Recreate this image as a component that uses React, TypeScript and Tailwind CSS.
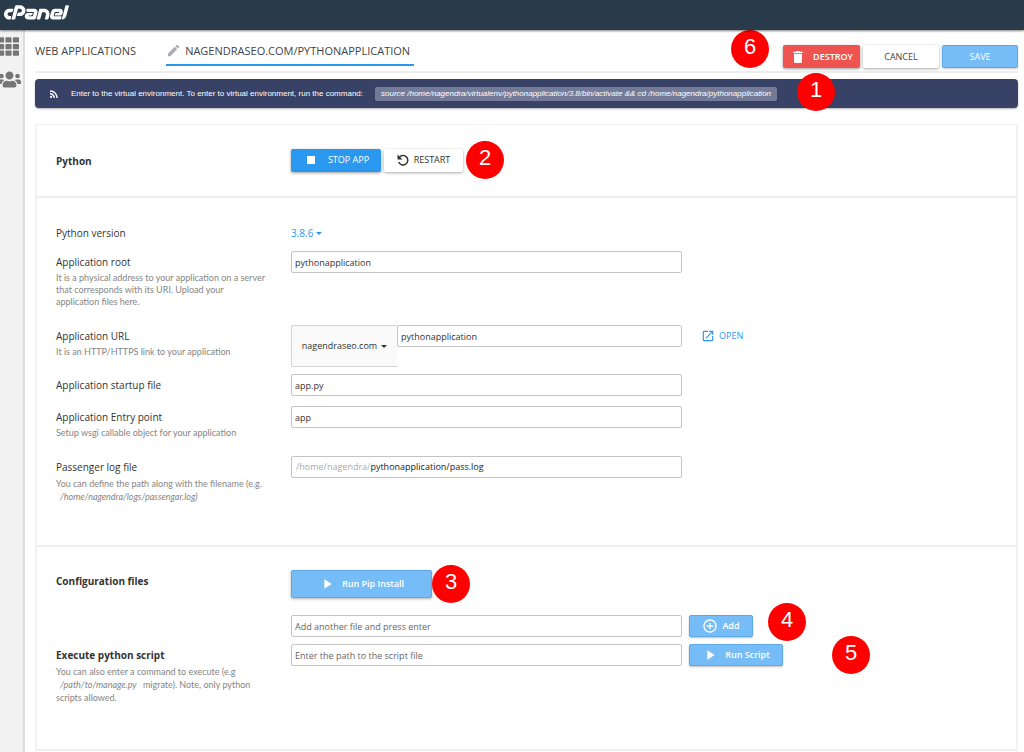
import type { ReactNode, ButtonHTMLAttributes } from "react";
import { FaCpanel, FaTh, FaUsers } from "react-icons/fa";
import {
  MdAddCircleOutline,
  MdDelete,
  MdEdit,
  MdOpenInNew,
  MdPlayArrow,
  MdRssFeed,
  MdStop,
} from "react-icons/md";

const inputClass =
  "h-[22px] w-full min-w-0 rounded-xs border border-[#c4c4c4] bg-white px-[3px] text-[9px] text-[#333] outline-none placeholder:text-[#666]";

type ButtonProps = ButtonHTMLAttributes<HTMLButtonElement>;

function Button({ className = "", children, ...rest }: ButtonProps) {
  return (
    <button
      type="button"
      className={`flex shrink-0 items-center justify-center rounded-xs text-[9px] ${className}`}
      {...rest}
    >
      {children}
    </button>
  );
}

function Marker({ value, className = "" }: { value: number; className?: string }) {
  return (
    <span
      className={`flex size-[38px] shrink-0 justify-center rounded-full bg-[#fe0000] pt-[5px] font-['Liberation_Sans',Arial,sans-serif] text-[22px] leading-6 text-white ${className}`}
    >
      {value}
    </span>
  );
}

function Caret({ className = "" }: { className?: string }) {
  return (
    <svg viewBox="0 0 6 3" aria-hidden="true" className={`h-[3px] w-[6px] fill-current ${className}`}>
      <path d="M0 0h6L3 3z" />
    </svg>
  );
}

function RestartIcon() {
  return (
    <svg viewBox="0 0 24 24" aria-hidden="true" className="size-3 text-[#333]">
      <path d="M4.2 7.5A9.4 9.4 0 1 1 3.4 16" fill="none" stroke="currentColor" strokeWidth="3" />
      <path d="M1 1v10h10z" fill="currentColor" />
    </svg>
  );
}

type RowProps = {
  label: string;
  htmlFor?: string;
  hint?: ReactNode;
  hintLeading?: string;
  bold?: boolean;
  extra?: ReactNode;
  labelPad?: string;
  className?: string;
  children: ReactNode;
};

function Row({
  label,
  htmlFor,
  hint,
  hintLeading = "leading-3",
  bold,
  extra,
  labelPad = "pt-[3px]",
  className = "",
  children,
}: RowProps) {
  const labelClass = bold
    ? "block text-[10px] leading-4 font-bold text-[#333]"
    : "block text-[10px] leading-4 text-[#333]";
  return (
    <div className={`grid grid-cols-[235px_minmax(0,391px)_minmax(0,1fr)] ${className}`}>
      <div className={`pr-5 ${labelPad}`}>
        {htmlFor ? (
          <label htmlFor={htmlFor} className={labelClass}>
            {label}
          </label>
        ) : (
          <h2 className={labelClass}>{label}</h2>
        )}
        {hint && (
          <p className={`mt-[2px] font-[Lato,sans-serif] text-[9px] text-[#858585] ${hintLeading}`}>{hint}</p>
        )}
      </div>
      <div className="flex items-start">{children}</div>
      <div className="flex items-start">{extra}</div>
    </div>
  );
}

export default function App() {
  return (
    <div className="flex min-h-screen flex-col bg-white font-['Open_Sans','Noto_Sans',sans-serif] text-[#333]">
      <header className="relative flex h-[30px] items-center bg-[#293a4a] shadow-[0_1px_2px_rgba(0,0,0,0.5)]">
        <a href="#home" aria-label="cPanel home" className="-mt-1 ml-1 block text-white">
          <FaCpanel className="h-[52px] w-[65px]" />
        </a>
      </header>

      <div className="flex grow">
        <nav className="flex w-[25px] shrink-0 flex-col gap-[11px] border-r-2 border-[#dcdcdc] bg-[#f2f2f2] pt-[6px] text-[#757575]">
          <a href="#applications" aria-label="Applications" className="-ml-[2px]">
            <FaTh className="size-[21px]" />
          </a>
          <a href="#users" aria-label="User manager" className="-ml-[2px]">
            <FaUsers className="size-[23px]" />
          </a>
        </nav>

        <main className="min-w-0 grow pr-[6px] pl-[10px]">
          <div className="flex h-[43px] items-start border-b-2 border-[#eeeeee] text-[11px]">
            <a href="#web-applications" className="pt-[13px] leading-4 text-[#444]">
              WEB APPLICATIONS
            </a>
            <a
              href="#pythonapplication"
              className="mt-[13px] ml-[30px] flex h-[23px] items-start gap-1 border-b-2 border-[#2a98f0] pr-1 leading-4 text-[#444]"
            >
              <MdEdit className="size-[15px] text-[#a9adb3]" />
              NAGENDRASEO.COM/PYTHONAPPLICATION
            </a>
            <Marker value={6} className="ml-auto" />
            <div className="mt-[15px] ml-[14px] flex gap-[3px]">
              <Button className="h-[23px] w-[77px] gap-[7px] bg-[#ef5350] font-semibold text-white shadow-[0_1px_3px_rgba(0,0,0,0.4)]">
                <MdDelete className="size-4" />
                DESTROY
              </Button>
              <Button className="h-[23px] w-[76px] bg-white text-[#444] shadow-[0_1px_3px_rgba(0,0,0,0.35)]">
                CANCEL
              </Button>
              <Button className="h-[23px] w-[76px] border border-[#5fa8e6] bg-[#76bcf7] text-white shadow-[0_1px_2px_rgba(0,0,0,0.2)]">
                SAVE
              </Button>
            </div>
          </div>

          <div className="relative mt-[6px] flex h-[29px] items-center rounded-sm bg-[#384166] px-[13px] font-['Liberation_Sans',Arial,sans-serif] text-[8px] text-white shadow-[0_1px_2px_rgba(0,0,0,0.3)]">
            <MdRssFeed className="size-3" />
            <span className="ml-[11px]">
              Enter to the virtual environment. To enter to virtual environment, run the command:
            </span>
            <code className="ml-3 rounded-xs bg-[#747b98] px-1.5 py-px font-['Liberation_Sans',Arial,sans-serif] leading-3 italic">
              source /home/nagendra/virtualenv/pythonapplication/3.8/bin/activate &amp;&amp; cd
              /home/nagendra/pythonapplication
            </code>
            <Marker value={1} className="absolute -top-[6px] left-[762px]" />
          </div>

          <div className="mt-4 border-x-2 border-t border-[#f2f2f2]">
            <section className="h-[73px] border-b-2 border-[#eeeeee] pt-4 pl-[19px]">
              <Row label="Python" bold labelPad="pt-3">
                <div className="flex items-center gap-[3px]">
                  <Button className="h-[23px] w-[90px] gap-[9px] bg-[#2b98f0] text-white shadow-[0_1px_3px_rgba(0,0,0,0.4)]">
                    <MdStop className="size-4" />
                    STOP APP
                  </Button>
                  <Button className="h-[23px] w-[79px] gap-[5px] bg-white text-[#333] shadow-[0_1px_3px_rgba(0,0,0,0.35)]">
                    <RestartIcon />
                    RESTART
                  </Button>
                  <Marker value={2} />
                </div>
              </Row>
            </section>

            <section className="border-b-2 border-[#eeeeee] pt-6 pb-[42px] pl-[19px]">
              <Row label="Python version" htmlFor="version">
                <div className="flex h-[22px] items-center gap-[3px] text-[#2b98f0]">
                  <select
                    id="version"
                    className="field-sizing-content appearance-none bg-transparent text-[10px] outline-none"
                  >
                    <option>3.8.6</option>
                  </select>
                  <Caret />
                </div>
              </Row>
              <Row
                className="mt-[7px]"
                label="Application root"
                htmlFor="root"
                hint={
                  <>
                    It is a physical address to your application on a server
                    <br />
                    that corresponds with its URI. Upload your
                    <br />
                    application files here.
                  </>
                }
              >
                <input id="root" className={inputClass} defaultValue="pythonapplication" />
              </Row>
              <Row
                className="mt-[17px]"
                label="Application URL"
                htmlFor="url"
                hint="It is an HTTP/HTTPS link to your application"
                extra={
                  <a
                    href="#open"
                    className="ml-[19px] flex h-[22px] items-center gap-1 text-[9px] text-[#2b98f0]"
                  >
                    <MdOpenInNew className="size-[14px]" />
                    OPEN
                  </a>
                }
              >
                <div className="flex h-[42px] w-[106px] shrink-0 items-center justify-center gap-1 rounded-l-xs border border-r-0 border-[#d4d4d4] bg-[#fafafa]">
                  <select
                    aria-label="Domain"
                    className="field-sizing-content appearance-none bg-transparent text-[9px] outline-none"
                  >
                    <option>nagendraseo.com</option>
                  </select>
                  <Caret />
                </div>
                <input id="url" className={inputClass} defaultValue="pythonapplication" />
              </Row>
              <Row className="mt-[7px]" label="Application startup file" htmlFor="startup">
                <input id="startup" className={inputClass} defaultValue="app.py" />
              </Row>
              <Row
                className="mt-[10px]"
                label="Application Entry point"
                htmlFor="entry"
                hint="Setup wsgi callable object for your application"
              >
                <input id="entry" className={inputClass} defaultValue="app" />
              </Row>
              <Row
                className="mt-[17px]"
                label="Passenger log file"
                htmlFor="log"
                hintLeading="leading-[13px]"
                hint={
                  <>
                    You can define the path along with the filename (e.g.
                    <br />
                    <i className="ml-1">/home/nagendra/logs/passengar.log)</i>
                  </>
                }
              >
                <div className="flex h-[22px] w-full items-center rounded-xs border border-[#c4c4c4] px-1 text-[9px]">
                  <span className="text-[#aaa]">/home/nagendra/</span>
                  <input
                    id="log"
                    className="min-w-0 grow bg-transparent text-[#222] outline-none"
                    defaultValue="pythonapplication/pass.log"
                  />
                </div>
              </Row>
            </section>

            <section className="border-b-2 border-[#eeeeee] pt-[18px] pb-[45px] pl-[19px]">
              <Row label="Configuration files" bold labelPad="pt-2">
                <div className="flex items-center">
                  <Button className="h-7 w-[141px] gap-[7px] border border-[#5fa8e6] bg-[#76bcf7] font-semibold text-white shadow-[0_1px_3px_rgba(0,0,0,0.3)]">
                    <MdPlayArrow className="size-4" />
                    Run Pip Install
                  </Button>
                  <Marker value={3} />
                </div>
              </Row>
              <div className="mt-3 grid grid-cols-[235px_minmax(0,391px)_minmax(0,1fr)]">
                <span />
                <input
                  aria-label="Add another file"
                  className={inputClass}
                  placeholder="Add another file and press enter"
                />
                <div className="relative">
                  <Button className="ml-[7px] h-[22px] w-[64px] gap-1 border border-[#5fa8e6] bg-[#76bcf7] font-semibold text-white shadow-[0_1px_2px_rgba(0,0,0,0.25)]">
                    <MdAddCircleOutline className="size-4" />
                    Add
                  </Button>
                  <Marker value={4} className="absolute -top-[12px] left-[86px]" />
                </div>
              </div>
              <Row
                className="mt-[7px]"
                label="Execute python script"
                htmlFor="script"
                bold
                hintLeading="leading-[13px]"
                hint={
                  <>
                    You can also enter a command to execute (e.g
                    <br />
                    <i className="mx-1">/path/to/manage.py</i> migrate). Note, only python
                    <br />
                    scripts allowed.
                  </>
                }
                extra={
                  <div className="relative">
                    <Button className="ml-[7px] h-[22px] w-[94px] gap-[7px] border border-[#5fa8e6] bg-[#76bcf7] font-semibold text-white shadow-[0_1px_2px_rgba(0,0,0,0.25)]">
                      <MdPlayArrow className="size-4" />
                      Run Script
                    </Button>
                    <Marker value={5} className="absolute -top-2 left-[150px]" />
                  </div>
                }
              >
                <input
                  id="script"
                  className={inputClass}
                  placeholder="Enter the path to the script file"
                />
              </Row>
            </section>
          </div>
        </main>
      </div>
    </div>
  );
}
